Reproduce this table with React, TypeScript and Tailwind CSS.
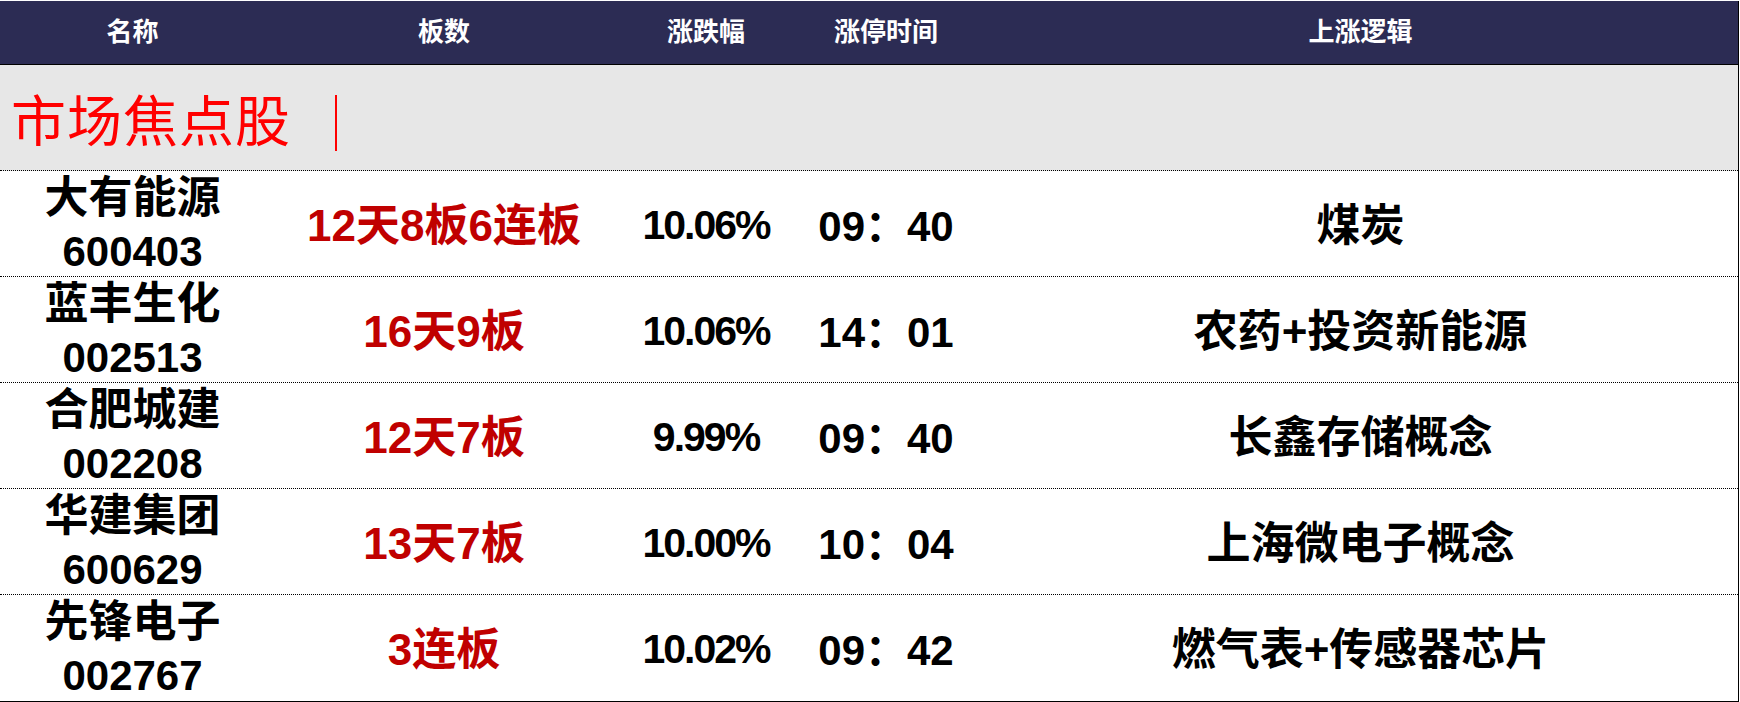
const rows = [
  { name: '大有能源', code: '600403', boards: '12天8板6连板', pct: '10.06%', time: '09：40', logic: '煤炭' },
  { name: '蓝丰生化', code: '002513', boards: '16天9板', pct: '10.06%', time: '14：01', logic: '农药+投资新能源' },
  { name: '合肥城建', code: '002208', boards: '12天7板', pct: '9.99%', time: '09：40', logic: '长鑫存储概念' },
  { name: '华建集团', code: '600629', boards: '13天7板', pct: '10.00%', time: '10：04', logic: '上海微电子概念' },
  { name: '先锋电子', code: '002767', boards: '3连板', pct: '10.02%', time: '09：42', logic: '燃气表+传感器芯片' },
];

const cols = 'grid grid-cols-[265px_358px_166px_194px_1fr]';
const font = { fontFamily: '"Liberation Sans", "Noto Sans CJK SC", sans-serif' };

function App() {
  return (
    <div className="w-[1740px] h-[702px] bg-white" style={font}>
      <div className="w-[1739px] border-r border-b border-black">
        {/* 表头 */}
        <div className={`${cols} h-[64px] mt-px bg-[#2c2c54] border-b border-black text-white text-[26px] font-bold items-center text-center`}>
          <div>名称</div>
          <div>板数</div>
          <div>涨跌幅</div>
          <div>涨停时间</div>
          <div>上涨逻辑</div>
        </div>

        {/* 分组标题 */}
        <div className="h-[106px] bg-[#e7e7e7] flex items-center pl-[11px] pt-[10px] border-b border-dotted border-black">
          <span className="text-[#ff0000] text-[55px] leading-none tracking-[1px]" style={{ fontFamily: '"Liberation Serif", "Noto Sans CJK SC", serif' }}>市场焦点股</span>
          <span className="ml-[44px] w-[2px] h-[56px] bg-[#ff0000]" />
        </div>

        {/* 数据行 */}
        {rows.map((r, i) => (
          <div
            key={r.code}
            className={`${cols} h-[106px] items-center text-center font-bold text-[44px] text-black ${i < rows.length - 1 ? 'border-b border-dotted border-black' : ''}`}
          >
            <div className="flex flex-col leading-[54px] pb-[2px]">
              <span>{r.name}</span>
              <span className="text-[42px]">{r.code}</span>
            </div>
            <div className="text-[#c00000]">{r.boards}</div>
            <div className="text-[41px] tracking-[-2px]">{r.pct}</div>
            <div className="text-[42px]">{r.time}</div>
            <div>{r.logic}</div>
          </div>
        ))}
      </div>
    </div>
  );
}

export default App;
